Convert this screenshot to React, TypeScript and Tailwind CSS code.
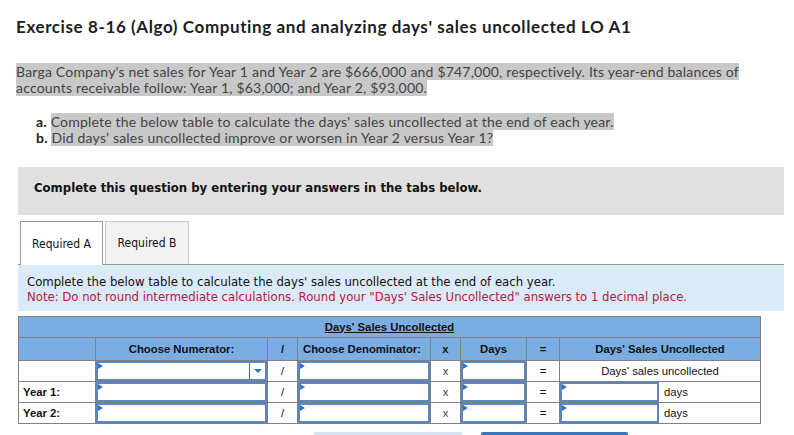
import React from "react";

const Marker = () => (
  <span className="absolute left-0 top-0 h-0 w-0 border-l-[5px] border-y-[3px] border-l-[#2f6fd0] border-y-transparent" />
);

const Input = ({ dropdown = false, w = "" }: { dropdown?: boolean; w?: string }) => (
  <div className={`relative h-[20px] border-2 border-[#5f86b8] bg-white ${w}`}>
    <Marker />
    {dropdown && (
      <div className="absolute right-0 top-0 flex h-full w-[16px] items-center justify-center border-l border-[#3a70b0]">
        <span className="h-0 w-0 border-x-[4px] border-t-[4px] border-x-transparent border-t-[#3a70b0]" />
      </div>
    )}
  </div>
);

export default function App() {
  const sans = { fontFamily: "Lato, 'Open Sans', sans-serif" };
  const verd = { fontFamily: "'DejaVu Sans', sans-serif" };
  const cond = { fontFamily: "'DejaVu Sans Condensed', 'DejaVu Sans', sans-serif" };
  const arial = { fontFamily: "'Liberation Sans', Arial, sans-serif" };
  const td = "border border-[#808080] p-0 align-middle";
  return (
    <div className="min-h-screen bg-white" style={sans}>
      <div className="pl-4 pt-[16px]">
        <h1 className="text-[17px] font-bold leading-[22px] tracking-[0.6px] text-[#1d1d1d]">
          Exercise 8-16 (Algo) Computing and analyzing days' sales uncollected LO A1
        </h1>
        <p className="mt-[26px] text-[14px] leading-[16px] tracking-[0.2px] text-[#444]">
          <span className="bg-[#c8c8c8]">
            Barga Company's net sales for Year 1 and Year 2 are $666,000 and $747,000, respectively. Its year-end balances of
            <br />
            accounts receivable follow: Year 1, $63,000; and Year 2, $93,000.
          </span>
        </p>
        <div className="mt-[18px] pl-5 text-[14px] leading-[16px] tracking-[0.2px] text-[#444]">
          <div>
            <b className="text-[#222]">a.</b> <span className="bg-[#c8c8c8]">Complete the below table to calculate the days' sales uncollected at the end of each year.</span>
          </div>
          <div>
            <b className="text-[#222]">b.</b> <span className="bg-[#c8c8c8]">Did days’ sales uncollected improve or worsen in Year 2 versus Year 1?</span>
          </div>
        </div>
      </div>

      <div className="ml-[18px] w-[766px]" style={verd}>
        <div className="mt-[21px] h-[48px] bg-[#e0e0e0] pl-4 pt-[13px] text-[11.7px] font-bold text-[#111]">
          Complete this question by entering your answers in the tabs below.
        </div>

        <div className="mt-[6px] flex gap-[2px] pl-[2px] text-[12px] text-[#111]" style={cond}>
          <div className="relative z-10 -mb-px flex h-[44px] w-[83px] items-center justify-center border border-b-0 border-[#999] bg-white">
            Required A
          </div>
          <div className="flex h-[43px] w-[84px] items-center justify-center border border-b-0 border-[#c8c8c8] bg-[#f2f2f2]">
            Required B
          </div>
        </div>

        <div className="h-[47px] border-t border-[#999] bg-[#dbeaf8] pl-[9px] pt-[10px] text-[11.7px] leading-[15px]">
          <div className="text-[#111]">Complete the below table to calculate the days' sales uncollected at the end of each year.</div>
          <div className="text-[#c0143c]">Note: Do not round intermediate calculations. Round your "Days' Sales Uncollected" answers to 1 decimal place.</div>
        </div>
      </div>

      <div className="ml-[18px] mt-[5px]" style={arial}>
        <table className="w-[742px] table-fixed border-collapse text-[11.3px] text-[#111]">
          <colgroup>
            <col className="w-[77px]" />
            <col className="w-[172px]" />
            <col className="w-[30px]" />
            <col className="w-[133px]" />
            <col className="w-[30px]" />
            <col className="w-[66px]" />
            <col className="w-[33px]" />
            <col className="w-[201px]" />
          </colgroup>
          <thead>
            <tr className="h-[21px] bg-[#7aaee3]">
              <th colSpan={8} className={`${td} font-bold`}>
                <span className="underline">Days' Sales Uncollected</span>
              </th>
            </tr>
            <tr className="h-[23px] bg-[#7aaee3] font-bold">
              <th className={td}></th>
              <th className={td}>Choose Numerator:</th>
              <th className={td}>/</th>
              <th className={`${td} text-left pl-[5px]`}>Choose Denominator:</th>
              <th className={td}>x</th>
              <th className={td}>Days</th>
              <th className={td}>=</th>
              <th className={td}>Days' Sales Uncollected</th>
            </tr>
          </thead>
          <tbody>
            <tr className="h-[21px]">
              <td className={td}></td>
              <td className={td}><Input dropdown /></td>
              <td className={`${td} text-center`}>/</td>
              <td className={td}><Input /></td>
              <td className={`${td} text-center text-[#444]`}>x</td>
              <td className={td}><Input /></td>
              <td className={`${td} text-center`}>=</td>
              <td className={`${td} text-center`}>Days' sales uncollected</td>
            </tr>
            {["Year 1:", "Year 2:"].map((y) => (
              <tr key={y} className="h-[21px]">
                <td className={`${td} pl-[4px] font-bold`}>{y}</td>
                <td className={td}><Input /></td>
                <td className={`${td} text-center`}>/</td>
                <td className={td}><Input /></td>
                <td className={`${td} text-center text-[#444]`}>x</td>
                <td className={td}><Input /></td>
                <td className={`${td} text-center`}>=</td>
                <td className={td}>
                  <div className="flex items-center">
                    <Input w="w-[99px]" />
                    <span className="pl-[5px]">days</span>
                  </div>
                </td>
              </tr>
            ))}
          </tbody>
        </table>
        <div className="ml-[296px] mt-[8px] flex gap-[19px]">
          <div className="h-[30px] w-[148px] rounded-t-[2px] bg-[#d6e2ef]" />
          <div className="h-[30px] w-[147px] rounded-t-[2px] bg-[#3a76b7]" />
        </div>
      </div>
    </div>
  );
}
